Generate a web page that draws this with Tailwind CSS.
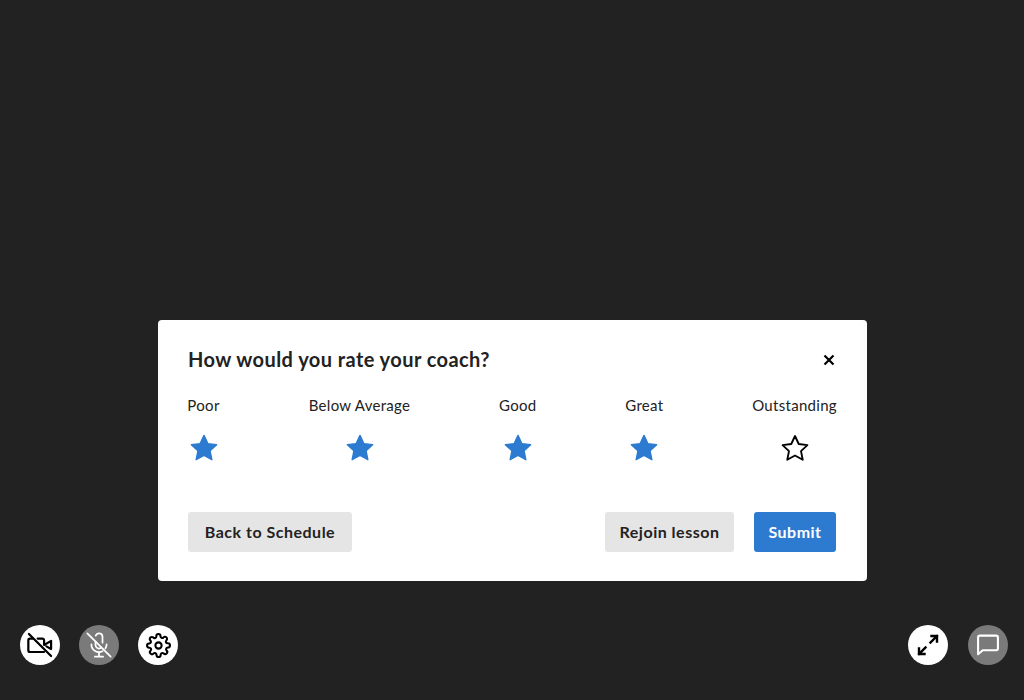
<!DOCTYPE html>
<html>

<head>
  <meta charset="UTF-8">
  <meta name="viewport" content="width=device-width, initial-scale=1.0">
  <script src="https://cdn.jsdelivr.net/npm/@tailwindcss/browser@4"></script>
  <title>Rate your coach</title>
</head>

<body class="bg-[#222222] font-['Lato',sans-serif]">

  <div class="flex h-[700px] w-[1024px] flex-col justify-between overflow-hidden">

    <!-- rating modal -->
    <div class="pl-[158px] pt-[320px]">
      <div class="flex h-[261px] w-[709px] flex-col rounded-[4px] bg-white pl-[29px] pr-[30px] pt-[24px] text-[#222222]">

        <div class="flex h-[32px] items-center justify-between pl-px">
          <h2 class="-mt-[2px] text-[20px] font-bold tracking-[0.43px]">How would you rate your coach?</h2>
          <button class="mr-[2px] text-black">
            <svg class="h-[12px] w-[12px]" viewBox="0 0 12 12" fill="none" stroke="currentColor" stroke-width="2.2">
              <path d="M1.5 1.5l9 9M10.5 1.5l-9 9" />
            </svg>
          </button>
        </div>

        <div class="mt-[17px] flex justify-between text-[15px] leading-[24px] tracking-[0.3px]">
          <div class="flex flex-col items-center">
            <span>Poor</span>
            <svg class="ml-[1px] mt-[15px] h-[32px] w-[32px] text-[#2d7bd0]" viewBox="0 0 24 24" fill="currentColor" stroke="currentColor" stroke-width="1" stroke-linejoin="round">
              <path d="M12 2.5l2.9 6.2 6.6.8-4.9 4.6 1.3 6.7L12 17.5l-5.9 3.3 1.3-6.7-4.9-4.6 6.6-.8z" />
            </svg>
          </div>
          <div class="flex flex-col items-center">
            <span>Below Average</span>
            <svg class="mt-[15px] h-[32px] w-[32px] text-[#2d7bd0]" viewBox="0 0 24 24" fill="currentColor" stroke="currentColor" stroke-width="1" stroke-linejoin="round">
              <path d="M12 2.5l2.9 6.2 6.6.8-4.9 4.6 1.3 6.7L12 17.5l-5.9 3.3 1.3-6.7-4.9-4.6 6.6-.8z" />
            </svg>
          </div>
          <div class="flex flex-col items-center">
            <span>Good</span>
            <svg class="mt-[15px] h-[32px] w-[32px] text-[#2d7bd0]" viewBox="0 0 24 24" fill="currentColor" stroke="currentColor" stroke-width="1" stroke-linejoin="round">
              <path d="M12 2.5l2.9 6.2 6.6.8-4.9 4.6 1.3 6.7L12 17.5l-5.9 3.3 1.3-6.7-4.9-4.6 6.6-.8z" />
            </svg>
          </div>
          <div class="flex flex-col items-center">
            <span>Great</span>
            <svg class="mt-[15px] h-[32px] w-[32px] text-[#2d7bd0]" viewBox="0 0 24 24" fill="currentColor" stroke="currentColor" stroke-width="1" stroke-linejoin="round">
              <path d="M12 2.5l2.9 6.2 6.6.8-4.9 4.6 1.3 6.7L12 17.5l-5.9 3.3 1.3-6.7-4.9-4.6 6.6-.8z" />
            </svg>
          </div>
          <div class="flex flex-col items-center">
            <span>Outstanding</span>
            <svg class="mt-[15px] h-[32px] w-[32px] text-black" viewBox="0 0 24 24" fill="none" stroke="currentColor" stroke-width="1.4" stroke-linejoin="round">
              <path d="M12 3l2.8 6 6.5.8-4.8 4.5 1.3 6.5L12 17.600l-5.800 3.200 1.300-6.500-4.800-4.500 6.500-.8z" />
            </svg>
          </div>
        </div>

        <div class="mr-px mt-[48px] flex items-center pl-px text-[16px] font-bold tracking-[0.5px]">
          <button class="h-[40px] w-[164px] rounded-[3px] bg-[#e5e5e5]">Back to Schedule</button>
          <button class="ml-auto h-[40px] w-[129px] rounded-[3px] bg-[#e5e5e5]">Rejoin lesson</button>
          <button class="ml-[20px] h-[40px] w-[82px] rounded-[3px] bg-[#2d7bd0] text-white">Submit</button>
        </div>
      </div>
    </div>

    <!-- call controls -->
    <div class="flex items-center justify-between pb-[35px] pl-[20px] pr-[16px]">
      <div class="flex gap-[19px]">
        <button class="flex h-[40px] w-[40px] items-center justify-center rounded-full bg-white text-black">
          <svg class="h-[28px] w-[28px]" viewBox="0 0 24 24" fill="none" stroke="currentColor" stroke-width="1.9" stroke-linecap="round" stroke-linejoin="round">
            <path d="M6 6.500H3.500a1.500 1.500 0 0 0-1.500 1.500v8.500a1.500 1.500 0 0 0 1.500 1.500H15.500" />
            <path d="M10 6.500h4a1.500 1.500 0 0 1 1.500 1.500v4l6-3.500v7l-4-2.300" />
            <path d="M2.500 2.500l19 19" />
          </svg>
        </button>
        <button class="flex h-[40px] w-[40px] items-center justify-center rounded-full bg-[#7a7a7a] text-white">
          <svg class="h-[28px] w-[28px]" viewBox="0 0 24 24" fill="none" stroke="currentColor" stroke-width="1.500" stroke-linecap="round" stroke-linejoin="round">
            <path d="M15 10V5a3 3 0 0 0-5.800-1" />
            <path d="M9 9v3a3 3 0 0 0 4.500 2.600" />
            <path d="M18.500 11.500a6.500 6.500 0 0 1-1 3.300M5.500 11.500a6.500 6.500 0 0 0 9.500 5.800" />
            <path d="M12 18.500V22M8.500 22h7" />
            <path d="M2 2l20 20" />
          </svg>
        </button>
        <button class="flex h-[40px] w-[40px] items-center justify-center rounded-full bg-white text-black">
          <svg class="h-[25px] w-[25px]" viewBox="0 0 24 24" fill="none" stroke="currentColor" stroke-width="2" stroke-linecap="round" stroke-linejoin="round">
            <circle cx="12" cy="12" r="3" />
            <path d="M19.400 15a1.650 1.650 0 0 0 .33 1.820l.06.06a2 2 0 0 1-2.830 2.830l-.06-.06a1.650 1.650 0 0 0-2.820 1.170V21a2 2 0 0 1-4 0v-.09A1.650 1.650 0 0 0 7.260 19.740l-.06.06a2 2 0 0 1-2.830-2.830l.06-.06a1.650 1.650 0 0 0-1.170-2.820H3a2 2 0 0 1 0-4h.09A1.650 1.650 0 0 0 4.260 7.260l-.06-.06a2 2 0 0 1 2.830-2.830l.06.06a1.650 1.650 0 0 0 2.820-1.170V3a2 2 0 0 1 4 0v.09a1.650 1.650 0 0 0 2.820 1.170l.06-.06a2 2 0 0 1 2.830 2.830l-.06.06a1.650 1.650 0 0 0 1.170 2.820H21a2 2 0 0 1 0 4h-.09A1.650 1.650 0 0 0 19.400 15z" />
          </svg>
        </button>
      </div>
      <div class="flex gap-[20px]">
        <button class="flex h-[40px] w-[40px] items-center justify-center rounded-full bg-white text-black">
          <svg class="h-[24px] w-[24px]" viewBox="0 0 24 24" fill="none" stroke="currentColor" stroke-width="2.400" stroke-linecap="square">
            <path d="M15.500 3H21v5.500M21 3l-6.500 6.500" />
            <path d="M8.500 21H3v-5.500M3 21l6.500-6.500" />
          </svg>
        </button>
        <button class="flex h-[40px] w-[40px] items-center justify-center rounded-full bg-[#7a7a7a] text-white">
          <svg class="h-[28px] w-[28px]" viewBox="0 0 24 24" fill="none" stroke="currentColor" stroke-width="1.800" stroke-linejoin="round">
            <path d="M5 4h14a1.500 1.500 0 0 1 1.500 1.500v9.500a1.500 1.500 0 0 1-1.500 1.500H7.500l-4 3.500V5.500A1.500 1.500 0 0 1 5 4z" />
          </svg>
        </button>
      </div>
    </div>

  </div>

</body>

</html>
